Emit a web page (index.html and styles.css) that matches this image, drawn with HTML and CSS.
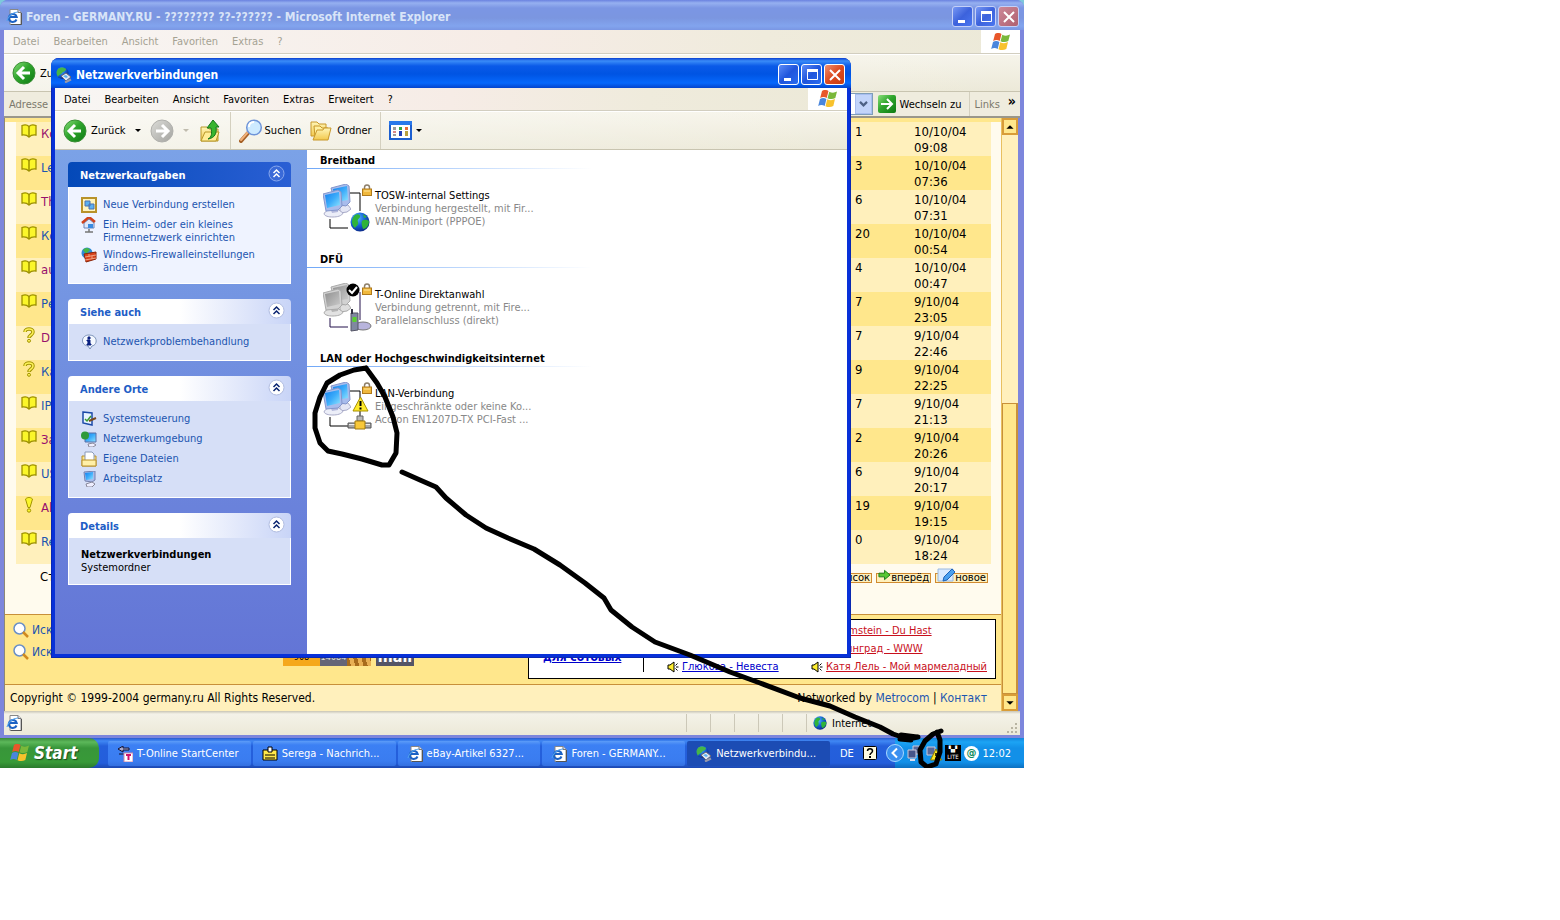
FILE: index.html
```html
<!DOCTYPE html>
<html lang="de">
<head>
    <meta charset="utf-8" />
    <meta name="viewport" content="width=device-width,initial-scale=1.0" />
    <title>Netzwerkverbindungen</title>
    <link rel="stylesheet" href="styles.css">
</head>
<body>
    <!-- shared icons -->
    <svg class="defs" width="0" height="0">
        <defs>
            <linearGradient id="gGreen" x1="0" y1="0" x2="1" y2="1"><stop offset="0" stop-color="#8be07a" /><stop offset=".45" stop-color="#2fa52c" /><stop offset="1" stop-color="#0c7a12" /></linearGradient>
            <linearGradient id="gGrey" x1="0" y1="0" x2="1" y2="1"><stop offset="0" stop-color="#dcdcd8" /><stop offset="1" stop-color="#a3a39f" /></linearGradient>
            <linearGradient id="gScreen" x1="0" y1="0" x2="1" y2="1"><stop offset="0" stop-color="#1480ee" /><stop offset=".5" stop-color="#3cacfa" /><stop offset="1" stop-color="#8fe4ff" /></linearGradient>
            <linearGradient id="gOff" x1="0" y1="0" x2="1" y2="1"><stop offset="0" stop-color="#8f8f8f" /><stop offset="1" stop-color="#cacaca" /></linearGradient>
            <radialGradient id="gGlobe" cx=".35" cy=".3" r=".8"><stop offset="0" stop-color="#5cc0ff" /><stop offset=".5" stop-color="#1460d8" /><stop offset="1" stop-color="#0a1f78" /></radialGradient>
            <linearGradient id="gFolder" x1="0" y1="0" x2="0" y2="1"><stop offset="0" stop-color="#fff6b8" /><stop offset="1" stop-color="#f2c84c" /></linearGradient>
        </defs>
        <symbol id="ie" viewBox="0 0 16 16">
            <path d="M4 .5h8l3 3v12H4z" fill="#fff" stroke="#888" /><path d="M12 .5v3h3" fill="#dde" stroke="#777" /><path d="M15.500 4v11.500H5" fill="none" stroke="#555" />
            <path d="M10.500 10.500a4 4 0 1 1 .2-2.500H4" fill="none" stroke="#1c62c4" stroke-width="2" />
            <path d="M1 12c1-5 6-9 11-9" fill="none" stroke="#4fa0ee" stroke-width="1.200" />
        </symbol>
        <symbol id="flag" viewBox="0 0 20 18">
            <path d="M4 1c2-1.500 4.500-1.300 6.500 0L8.700 8c-2-1.300-4.400-1.300-6.500 0z" fill="#e8562a" />
            <path d="M11.300 1.800c2.400 1.200 5 1.300 7.700-.2L17.300 8c-2.600 1.500-5.300 1.300-7.800.2z" fill="#7ab83a" />
            <path d="M2 9c2-1.400 4.400-1.300 6.400 0l-1.700 7c-2-1.300-4.400-1.300-6.500 0z" fill="#4a86dc" />
            <path d="M9.200 9.300c2.500 1.200 5.200 1.300 7.800-.2L15.300 16c-2.600 1.500-5.300 1.300-7.800.2z" fill="#f8c22c" />
        </symbol>
        <symbol id="back" viewBox="0 0 24 24">
            <circle cx="12" cy="12" r="11" fill="url(#gGreen)" stroke="#3a8f35" /><path d="M12 6l-6 6 6 6M7 12h11" fill="none" stroke="#fff" stroke-width="3" />
        </symbol>
        <symbol id="forward" viewBox="0 0 24 24">
            <circle cx="12" cy="12" r="11" fill="url(#gGrey)" stroke="#b0b0ac" /><path d="M12 6l6 6-6 6M17 12H6" fill="none" stroke="#fff" stroke-width="3" />
        </symbol>
        <symbol id="folder" viewBox="0 0 24 24">
            <path d="M2 3h6l2 2h7v12H2z" fill="url(#gFolder)" stroke="#c8982a" /><path d="M5 7h6l2 2h6v9H6z" fill="#fff0a0" stroke="#c8982a" /><path d="M4 21l4-10h6l1-2h7l-3 12z" fill="url(#gFolder)" stroke="#c8982a" />
        </symbol>
        <symbol id="up" viewBox="0 0 22 24">
            <path d="M2 8h6l2 2h9v12H2z" fill="url(#gFolder)" stroke="#b8982a" /><path d="M2 22l4-9h14l-3 9z" fill="#ffed96" stroke="#b8982a" />
            <path d="M9 20c4-2 4-6 3-11H8l6-8 6 7h-3c1 6-1 11-8 12z" fill="#37b52e" stroke="#14761a" />
        </symbol>
        <symbol id="lens" viewBox="0 0 24 24">
            <path d="M2 22l7-8" stroke="#a55f25" stroke-width="4" stroke-linecap="round" /><path d="M2 21l7-8" stroke="#f2b27a" stroke-width="2" stroke-linecap="round" />
            <circle cx="15" cy="8.500" r="7.300" fill="#cdeaff" stroke="#6f94d8" stroke-width="1.500" /><path d="M10 8c0-3 2-5 5-5" stroke="#fff" stroke-width="2" fill="none" />
        </symbol>
        <symbol id="views" viewBox="0 0 24 20">
            <rect x="1" y="1" width="21" height="17" fill="#fff" stroke="#1c5fd0" stroke-width="2" /><path d="M0 0h23v4H0z" fill="#2a78ea" />
            <path d="M4 6h3v3H4zM4 13h3v2H4z" fill="#9a9a9a" /><path d="M10 6h3v3h-3z" fill="#36a545" /><path d="M16 6h3v3h-3z" fill="#e86a35" /><path d="M4 10h3v2H4z" fill="#d88" /><path d="M10 10h3v5h-3z" fill="#2340b8" /><path d="M16 10h3v5h-3z" fill="#b8a040" />
        </symbol>
        <symbol id="net" viewBox="0 0 16 16">
            <circle cx="6.500" cy="6" r="6" fill="url(#gGlobe)" /><path d="M2 2c2-2 6-2 8 0 0 3-3 2-4 4s-3 1-4 4C0 7 0 4 2 2z" fill="#46b548" />
            <path d="M5 9l5-3 5 4-5 4z" fill="#dfe6f4" stroke="#667" /><path d="M7 9l3-1 2 2-2 1z" fill="#5ab0f0" /><path d="M9 15.500l6-3" stroke="#99a" stroke-width="2" />
        </symbol>
        <symbol id="globe" viewBox="0 0 20 20">
            <circle cx="10" cy="10" r="9.500" fill="url(#gGlobe)" /><path d="M5 3c3-2 6 0 5 2S7 7 8 10s-2 4-3 6C1 13 1 7 5 3zM12 9c3-2 5-1 7 0 0 5-3 8-6 8-1-3-2-6-1-8zM13 2l4 3-3 1z" fill="#2fb33a" />
        </symbol>
        <symbol id="pcs" viewBox="0 0 28 34">
            <path d="M17 22l8-1 3 4-4 3-7 1z" fill="#e4e6f4" stroke="#a9abc8" />
            <path d="M8 4l15-4 3 2 1 16-4 4-11-2z" fill="#a8bcec" stroke="#8496cc" /><path d="M10 5l14-3 1 14-13 2z" fill="url(#gScreen)" />
            <path d="M1 30c1-3 4-4 9-5l6 1 4 3c-1 3-6 4-10 4-5 0-8-1-9-3z" fill="#eceef8" stroke="#a9abc8" /><path d="M7 24l8-1v5l-6 1z" fill="#b4b9dc" />
            <path d="M0 10l15-4 3 2 1 14-4 4-12 1z" fill="#a8bcec" stroke="#8496cc" /><path d="M2 11l14-3 1 13-13 3z" fill="url(#gScreen)" />
        </symbol>
        <symbol id="pcsOff" viewBox="0 0 28 34">
            <path d="M17 22l8-1 3 4-4 3-7 1z" fill="#dedede" stroke="#aaa" />
            <path d="M8 4l15-4 3 2 1 16-4 4-11-2z" fill="#d2d2d2" stroke="#aaa" /><path d="M10 5l14-3 1 14-13 2z" fill="url(#gOff)" />
            <path d="M1 30c1-3 4-4 9-5l6 1 4 3c-1 3-6 4-10 4-5 0-8-1-9-3z" fill="#e2e2e2" stroke="#aaa" /><path d="M7 24l8-1v5l-6 1z" fill="#b4b4b4" />
            <path d="M0 10l15-4 3 2 1 14-4 4-12 1z" fill="#d2d2d2" stroke="#aaa" /><path d="M2 11l14-3 1 13-13 3z" fill="url(#gOff)" />
        </symbol>
        <symbol id="lock" viewBox="0 0 10 12">
            <path d="M2.500 6V3.500C2.500 0 7.500 0 7.500 3.500V6" fill="none" stroke="#8d7f6a" stroke-width="1.500" /><rect x=".5" y="5" width="9" height="6.500" fill="#f0b83c" stroke="#b07a1c" /><path d="M2 7h6" stroke="#ffe49a" />
        </symbol>
        <symbol id="book" viewBox="0 0 16 14">
            <path d="M1 1.500c3-1 5-1 7 1 2-2 4-2 7-1V11c-3-.5-5 0-7 2-2-2-4-2.500-7-2z" fill="#fbf62a" stroke="#9c9000" stroke-width="1.300" /><path d="M8 2.500V13" stroke="#9c9000" stroke-width="1.500" />
        </symbol>
        <symbol id="quest" viewBox="0 0 16 16">
            <path d="M4 5c0-4 8-4 8 0 0 3-4 3-4 6" fill="none" stroke="#a29400" stroke-width="3.500" /><path d="M4 5c0-4 8-4 8 0 0 3-4 3-4 5.500" fill="none" stroke="#fff25a" stroke-width="1.500" /><circle cx="8" cy="13.800" r="1.500" fill="#fff25a" stroke="#a29400" />
        </symbol>
        <symbol id="excl" viewBox="0 0 16 16">
            <path d="M4.500 2c2-2 5-2 7 0L9 10.500H7z" fill="#fbf62a" stroke="#a29400" /><circle cx="8" cy="13.500" r="1.700" fill="#fbf62a" stroke="#a29400" />
        </symbol>
        <symbol id="chev" viewBox="0 0 20 20">
            <circle class="chev-disc" cx="9.500" cy="9.500" r="7.500" /><path class="chev-line" d="M6.500 9l3-3 3 3M6.500 13l3-3 3 3" />
        </symbol>
        <symbol id="sound" viewBox="0 0 12 12"><path d="M1 4h2l4-3v10L3 8H1z" fill="#ffef30" stroke="#000" /><path d="M8.500 4.500l2-2M9 6h2.500M8.500 7.500l2 2" stroke="#000" /></symbol>
        <symbol id="pc" viewBox="0 0 16 16"><path d="M3 1l11-1v9l-3 2-7-1z" fill="#a8bcec" stroke="#7582ae" /><path d="M4 2l8-1v7l-7 1z" fill="url(#gScreen)" /><path d="M5 13l6-2 3 2-3 3H6z" fill="#eef" stroke="#889" /></symbol>
        <symbol id="down" viewBox="0 0 8 5"><path d="M1 1h6L4 4z" /></symbol>
        <symbol id="min" viewBox="0 0 16 16"><path d="M3 11h7v3H3z" fill="#fff" /></symbol>
        <symbol id="max" viewBox="0 0 16 16"><path d="M3.500 3.500h10v9h-10z" fill="none" stroke="#fff" /><path d="M3 2h11v3H3z" fill="#fff" /></symbol>
        <symbol id="close" viewBox="0 0 16 16"><path d="M3 3l10 10M13 3L3 13" stroke="#fff" stroke-width="2" /></symbol>
    </svg>

    <div class="desktop">
        <!-- browser window -->
        <section class="window browser">
            <header class="titlebar">
                <svg class="i16"><use href="#ie" /></svg>
                <h1>Foren - GERMANY.RU - ???????? ??-?????? - Microsoft Internet Explorer</h1>
                <button class="cap" aria-label="Minimieren"><svg><use href="#min" /></svg></button>
                <button class="cap" aria-label="Maximieren"><svg><use href="#max" /></svg></button>
                <button class="cap red" aria-label="Schließen"><svg><use href="#close" /></svg></button>
            </header>
            <nav class="menubar">
                <button>Datei</button><button>Bearbeiten</button><button>Ansicht</button><button>Favoriten</button><button>Extras</button><button>?</button>
                <span class="brand"><svg><use href="#flag" /></svg></span>
            </nav>
            <div class="toolbar">
                <button class="tool"><svg class="i24"><use href="#back" /></svg>Zurück</button>
            </div>
            <div class="address">
                <label for="adresse">Adresse</label>
                <select id="adresse"><option></option></select>
                <button class="drop" aria-label="Liste"><svg viewBox="0 0 10 8"><path d="M1 1l4 4 4-4" fill="none" stroke="#4d6185" stroke-width="2.500" /></svg></button>
                <button class="go"><svg viewBox="0 0 18 18"><rect width="18" height="18" rx="2" fill="url(#gGreen)" /><path d="M3 9h11M9 4l5 5-5 5" fill="none" stroke="#fff" stroke-width="2" /></svg>Wechseln zu</button>
                <span class="links">Links <b>»</b></span>
            </div>
            <div class="view">
                <div class="page">
                    <table class="threads">
                        <tr><td><svg><use href="#book" /></svg></td><td><a class="seen" href="#">Ко</a></td><td>1</td><td>10/10/04<br>09:08</td></tr>
                        <tr><td><svg><use href="#book" /></svg></td><td><a href="#">Le</a></td><td>3</td><td>10/10/04<br>07:36</td></tr>
                        <tr><td><svg><use href="#book" /></svg></td><td><a class="seen" href="#">Th</a></td><td>6</td><td>10/10/04<br>07:31</td></tr>
                        <tr><td><svg><use href="#book" /></svg></td><td><a href="#">Ко</a></td><td>20</td><td>10/10/04<br>00:54</td></tr>
                        <tr><td><svg><use href="#book" /></svg></td><td><a class="seen" href="#">au</a></td><td>4</td><td>10/10/04<br>00:47</td></tr>
                        <tr><td><svg><use href="#book" /></svg></td><td><a href="#">Ре</a></td><td>7</td><td>9/10/04<br>23:05</td></tr>
                        <tr><td><svg><use href="#quest" /></svg></td><td><a class="seen" href="#">D</a></td><td>7</td><td>9/10/04<br>22:46</td></tr>
                        <tr><td><svg><use href="#quest" /></svg></td><td><a href="#">Ка</a></td><td>9</td><td>9/10/04<br>22:25</td></tr>
                        <tr><td><svg><use href="#book" /></svg></td><td><a href="#">IP</a></td><td>7</td><td>9/10/04<br>21:13</td></tr>
                        <tr><td><svg><use href="#book" /></svg></td><td><a class="seen" href="#">За</a></td><td>2</td><td>9/10/04<br>20:26</td></tr>
                        <tr><td><svg><use href="#book" /></svg></td><td><a href="#">US</a></td><td>6</td><td>9/10/04<br>20:17</td></tr>
                        <tr><td><svg><use href="#excl" /></svg></td><td><a class="seen" href="#">Al</a></td><td>19</td><td>9/10/04<br>19:15</td></tr>
                        <tr><td><svg><use href="#book" /></svg></td><td><a href="#">Re</a></td><td>0</td><td>9/10/04<br>18:24</td></tr>
                    </table>
                    <div class="pager">
                        <span>Стр</span>
                        <button>список</button>
                        <button><svg viewBox="0 0 14 12"><path d="M1 4h6V1l6 5-6 5V8H1z" fill="#58c832" stroke="#1a7a1a" /></svg>вперёд</button>
                        <button><svg class="pen" viewBox="0 0 18 14"><path d="M1 1h15v12H1z" fill="#d8eaff" stroke="#9ab8e0" /><path d="M6 13l1-4 8-8 3 3-8 8z" fill="#4aa0ee" stroke="#1c62b8" /></svg>новое</button>
                    </div>
                    <div class="foot">
                        <div class="find">
                            <a href="#"><svg viewBox="0 0 16 16"><circle cx="6.500" cy="6.500" r="5.500" fill="#fff" stroke="#6a90c8" stroke-width="1.500" /><path d="M10 10l5 5" stroke="#d08a20" stroke-width="2.500" /></svg>Иск</a>
                            <a href="#"><svg viewBox="0 0 16 16"><circle cx="6.500" cy="6.500" r="5.500" fill="#fff" stroke="#6a90c8" stroke-width="1.500" /><path d="M10 10l5 5" stroke="#d08a20" stroke-width="2.500" /></svg>Иск</a>
                        </div>
                        <div class="badges"><span class="hits">908</span><span class="hosts">14084</span><span class="paw"></span><span class="mail">mail</span></div>
                        <div class="music">
                            <a class="cell" href="#">для сотовых</a>
                            <ul>
                                <li><a href="#">Глюкоза - Невеста</a><svg><use href="#sound" /></svg></li>
                            </ul>
                            <ul class="hot">
                                <li><a href="#">Rammstein - Du Hast</a><svg><use href="#sound" /></svg></li>
                                <li><a href="#">Ленинград - WWW</a><svg><use href="#sound" /></svg></li>
                                <li><a href="#">Катя Лель - Мой мармеладный</a><svg><use href="#sound" /></svg></li>
                            </ul>
                        </div>
                    </div>
                    <div class="copy">
                        <span>Copyright © 1999-2004 germany.ru All Rights Reserved.</span>
                        <span>Networked by <a href="#">Metrocom</a> | <a href="#">Контакт</a></span>
                    </div>
                </div>
                <div class="scroll">
                    <button aria-label="Nach oben"><svg class="flip"><use href="#down" /></svg></button>
                    <div class="thumb"></div>
                    <button aria-label="Nach unten"><svg><use href="#down" /></svg></button>
                </div>
            </div>
            <footer class="status">
                <svg class="i16"><use href="#ie" /></svg>
                <i></i><i></i><i></i><i></i><i></i>
                <span class="zone"><svg><use href="#globe" /></svg>Internet</span>
                <svg class="grip" viewBox="0 0 12 12"><path d="M9 1h2M5 5h2M9 5h2M1 9h2M5 9h2M9 9h2" stroke="#b8b4a2" stroke-width="2" /></svg>
            </footer>
        </section>

        <!-- taskbar -->
        <footer class="taskbar">
            <button class="start"><svg><use href="#flag" /></svg>Start</button>
            <div class="tasks">
                <button><svg viewBox="0 0 16 16"><path d="M1 3l5-3v2h6v2H6v2zM2 8h8" fill="#aac" stroke="#113" /><rect x="7" y="7" width="9" height="9" fill="#fff" stroke="#c8a" /><path d="M9 9h5M11.500 9v5" stroke="#d0106a" stroke-width="2" /></svg>T-Online StartCenter</button>
                <button><svg viewBox="0 0 16 16"><path d="M1 4h14v10H1z" fill="#ffe94a" stroke="#000" /><path d="M6 1h4v5H6z" fill="#fff" stroke="#000" /><path d="M3 9h10M3 12h10" stroke="#000" /></svg>Serega - Nachrich...</button>
                <button><svg><use href="#ie" /></svg>eBay-Artikel 6327...</button>
                <button><svg><use href="#ie" /></svg>Foren - GERMANY...</button>
                <button class="active"><svg><use href="#net" /></svg>Netzwerkverbindu...</button>
            </div>
            <div class="lang"><span>DE</span><svg viewBox="0 0 14 16"><rect x=".5" y="1.500" width="13" height="13" rx="1" fill="#fffbe0" stroke="#000" /><path d="M4.500 6c0-3 5-3 5 0 0 2-2.500 2-2.500 4" fill="none" stroke="#000" stroke-width="1.500" /><path d="M6 11h2v2H6z" /></svg></div>
            <div class="tray">
                <button class="more" aria-label="Einblenden"><svg viewBox="0 0 18 18"><circle cx="9" cy="9" r="8.500" fill="#3a90f0" stroke="#a8d8ff" /><path d="M11 4.500L6.500 9l4.500 4.500" fill="none" stroke="#fff" stroke-width="2" /></svg></button>
                <svg viewBox="0 0 16 16"><path d="M6 1h8v8H6z" fill="#5a6a9a" stroke="#ccd" /><path d="M1 5h8v8H1z" fill="#46558a" stroke="#ccd" /><path d="M3 15h5" stroke="#dde" stroke-width="2" /></svg>
                <svg viewBox="0 0 16 16"><path d="M1 2h8v8H1z" fill="#5a6a9a" stroke="#ccd" /><path d="M10 4l5.500 11h-11z" fill="#ffe824" stroke="#8a7a00" /><path d="M10 8v3M10 12.500v1.500" stroke="#000" stroke-width="1.500" /></svg>
                <span class="lite"><b>▚▞</b>LITE</span>
                <span class="at">@</span>
                <time>12:02</time>
            </div>
        </footer>

        <!-- network connections window, lies over the browser -->
        <section class="window explorer">
            <header class="titlebar">
                <svg class="i16"><use href="#net" /></svg>
                <h2>Netzwerkverbindungen</h2>
                <button class="cap" aria-label="Minimieren"><svg><use href="#min" /></svg></button>
                <button class="cap" aria-label="Maximieren"><svg><use href="#max" /></svg></button>
                <button class="cap red" aria-label="Schließen"><svg><use href="#close" /></svg></button>
            </header>
            <nav class="menubar">
                <button>Datei</button><button>Bearbeiten</button><button>Ansicht</button><button>Favoriten</button><button>Extras</button><button>Erweitert</button><button>?</button>
                <span class="brand"><svg><use href="#flag" /></svg></span>
            </nav>
            <div class="toolbar">
                <button class="tool"><svg class="i24"><use href="#back" /></svg>Zurück <svg class="tri"><use href="#down" /></svg></button>
                <button class="tool dim" aria-label="Vorwärts"><svg class="i24"><use href="#forward" /></svg><svg class="tri"><use href="#down" /></svg></button>
                <button class="tool" aria-label="Aufwärts"><svg class="i24"><use href="#up" /></svg></button>
                <i class="sep"></i>
                <button class="tool tight"><svg class="i24"><use href="#lens" /></svg>Suchen</button>
                <button class="tool"><svg class="i24"><use href="#folder" /></svg>Ordner</button>
                <i class="sep"></i>
                <button class="tool tight" aria-label="Ansichten"><svg class="i24"><use href="#views" /></svg><svg class="tri"><use href="#down" /></svg></button>
            </div>
            <div class="panes">
                <aside>
                    <div class="box main">
                        <h3>Netzwerkaufgaben<button aria-label="Zuklappen"><svg><use href="#chev" /></svg></button></h3>
                        <ul>
                            <li><svg viewBox="0 0 16 16"><path d="M1 1h14v14H1z" fill="#fff4c0" stroke="#b8922a" stroke-width="2" /><path d="M4 4h5v5H4zM8 7h5v5H8z" fill="#5ab0f0" stroke="#4a70b0" /></svg><a href="#">Neue Verbindung erstellen</a></li>
                            <li><svg viewBox="0 0 16 16"><path d="M3 6l5-4 5 4v5H3z" fill="#dfe8fa" stroke="#6a84b8" /><path d="M1 6l7-6 6 5" fill="none" stroke="#d0421c" stroke-width="2.500" /><path d="M7 7h5v4H7z" fill="#3a8ae0" /><path d="M8 12v3M4 15h8" stroke="#777" stroke-width="1.500" /></svg><a href="#">Ein Heim- oder ein kleines Firmennetzwerk einrichten</a></li>
                            <li><svg viewBox="0 0 16 16"><circle cx="6" cy="6" r="5.500" fill="#2c8ad8" /><path d="M2 3c3-3 6-2 7 0l-4 4z" fill="#46b548" /><path d="M3 7l12-2v7L5 15z" fill="#d8431c" stroke="#8a2408" /><path d="M4 10l11-2M4 13l11-2M8 7v3M11 9v3" stroke="#f0a080" /></svg><a href="#">Windows-Firewalleinstellungen ändern</a></li>
                        </ul>
                    </div>
                    <div class="box">
                        <h3>Siehe auch<button aria-label="Zuklappen"><svg><use href="#chev" /></svg></button></h3>
                        <ul>
                            <li><svg viewBox="0 0 16 16"><path d="M8 1c9 0 9 10 3 11l-2 3-2-3C-1 11 0 1 8 1z" fill="#f4f8ff" stroke="#7c93b8" /><path d="M7 3h2v2H7zM6 6h3v4h1v1H6v-1h1V7H6z" fill="#0a2080" stroke="#0a2080" /></svg><a href="#">Netzwerkproblembehandlung</a></li>
                        </ul>
                    </div>
                    <div class="box">
                        <h3>Andere Orte<button aria-label="Zuklappen"><svg><use href="#chev" /></svg></button></h3>
                        <ul>
                            <li><svg viewBox="0 0 16 16"><path d="M2 1l9 1v12l-9-2z" fill="#e8f4ff" stroke="#1c4aa8" stroke-width="1.500" /><path d="M4 8l2 2 4-5" fill="none" stroke="#3a9a30" stroke-width="1.500" /><path d="M8 10l7-3" stroke="#7a4a20" stroke-width="2" /></svg><a href="#">Systemsteuerung</a></li>
                            <li><svg viewBox="0 0 16 16"><path d="M4 2h11v9H4z" fill="url(#gScreen)" stroke="#5a70a8" /><circle cx="4" cy="4.500" r="4" fill="#2f9a3a" /><path d="M7 13l5-1 3 2-3 2H8z" fill="#eef" stroke="#889" /></svg><a href="#">Netzwerkumgebung</a></li>
                            <li><svg viewBox="0 0 16 16"><path d="M1 5h14v10H1z" fill="#ffe68a" stroke="#b8902a" /><path d="M4 1h7l2 2v7H4z" fill="#fff" stroke="#8a9ab8" /><path d="M1 9h14v6H1z" fill="#fff0a8" stroke="#b8902a" /></svg><a href="#">Eigene Dateien</a></li>
                            <li><svg><use href="#pc" /></svg><a href="#">Arbeitsplatz</a></li>
                        </ul>
                    </div>
                    <div class="box">
                        <h3>Details<button aria-label="Zuklappen"><svg><use href="#chev" /></svg></button></h3>
                        <p><b>Netzwerkverbindungen</b><br>Systemordner</p>
                    </div>
                </aside>
                <main>
                    <h4>Breitband</h4>
                    <div class="conn">
                        <svg viewBox="0 0 50 50">
                            <path d="M27 10h10v18M7 36v9h18" fill="none" stroke="#000" />
                            <use href="#pcs" width="28" height="34" y="1" /><use href="#lock" x="39" y="1" width="10" height="12" /><use href="#globe" x="27" y="29" width="20" height="20" />
                        </svg>
                        <p>TOSW-internal Settings<span>Verbindung hergestellt, mit Fir...</span><span>WAN-Miniport (PPPOE)</span></p>
                    </div>
                    <h4>DFÜ</h4>
                    <div class="conn">
                        <svg viewBox="0 0 50 50">
                            <path d="M37 10v28M7 36v9h18" fill="none" stroke="#22104a" />
                            <use href="#pcsOff" width="28" height="34" y="1" /><use href="#lock" x="39" y="1" width="10" height="12" />
                            <circle cx="30" cy="8" r="6.500" /><path d="M26 8l3 3 5-6" fill="none" stroke="#fff" stroke-width="2" />
                            <ellipse cx="40" cy="44" rx="8" ry="4" fill="#b8b4dc" stroke="#777" /><path d="M28 31h7v17l-7 1z" fill="#8088a0" stroke="#556" /><path d="M29.500 35h4v5h-4z" fill="#5ad030" /><path d="M29 27v5" stroke="#334" stroke-width="2" />
                        </svg>
                        <p>T-Online Direktanwahl<span>Verbindung getrennt, mit Fire...</span><span>Parallelanschluss (direkt)</span></p>
                    </div>
                    <h4>LAN oder Hochgeschwindigkeitsinternet</h4>
                    <div class="conn">
                        <svg viewBox="0 0 50 50">
                            <path d="M27 10h10v32M7 36v9h18" fill="none" stroke="#000" />
                            <use href="#pcs" width="28" height="34" y="1" /><use href="#lock" x="39" y="1" width="10" height="12" />
                            <path d="M37.500 16l7.500 14H30z" fill="#ffea2a" stroke="#a89000" /><path d="M37.500 20v5M37.500 26.500v2" stroke="#000" stroke-width="2" />
                            <path d="M25 42h23v5H25z" fill="#a8a8a8" stroke="#555" /><path d="M26 43.500h21" stroke="#eee" /><path d="M34 35h6v5h-6z" fill="#b8b8b8" stroke="#666" /><path d="M32 40h10v8H32z" fill="#f8c83a" stroke="#a07a10" />
                        </svg>
                        <p>LAN-Verbindung<span>Eingeschränkte oder keine Ko...</span><span>Accton EN1207D-TX PCI-Fast ...</span></p>
                    </div>
                </main>
            </div>
        </section>

        <!-- pen marks -->
        <svg class="pen-marks" width="1024" height="768" viewBox="0 0 1024 768">
            <path d="M366 368L354 370 340 375 327 383 320 397 315 413 315 428 320 443 328 451 342 454 362 459 382 465 389 465 396 453 397 433 393 417 385 397 377 383 366 368" />
            <path d="M402 472L420 480 436 487 446 498 466 515 486 528 508 538 534 549 560 565 585 583 604 598 611 610 632 627 655 642 690 655 730 672 760 683 800 698 830 706 855 717 880 727 893 734 908 739 918 737M900 739L911 740M901 735L917 737" />
            <path d="M941 731L933 734 925 741 920 750 921 762 927 767 936 764 940 752 940 740 937 732" />
        </svg>
    </div>
</body>
</html>
```
FILE: styles.css
```css
* {
    box-sizing: border-box;
    padding: 0;
    margin: 0;
}

body {
    background: #fff;
    font-family: Tahoma, "DejaVu Sans Condensed", "Noto Sans", sans-serif;
    font-size: 11px;
    line-height: 13px;
    color: #000;
}

button {
    font: inherit;
    color: inherit;
    background: none;
    border: none;
}

a {
    color: #1c55b0;
    text-decoration: none;
}

ul {
    list-style: none;
}

svg {
    flex: none;
}

.defs {
    position: absolute;
}

.desktop {
    position: relative;
    max-width: 1024px;
    background: #7dc8dc;
}

.i16 {
    width: 16px;
    height: 16px;
}

.i24 {
    width: 24px;
    height: 24px;
}

/* windows */
.window {
    border-radius: 8px 8px 0 0;
}

.browser {
    background: #7d86dc;
    padding: 0 4px 3px;
}

.explorer {
    position: absolute;
    top: 58px;
    left: 51px;
    right: 173px;
    background: #0831d9;
    border: 1px solid #0a28b0;
    border-top: none;
    padding: 0 3px 3px;
}

.titlebar {
    display: flex;
    align-items: center;
    gap: 3px;
    height: 30px;
    margin: 0 -4px;
    padding: 3px 5px 0 6px;
    border-radius: 8px 8px 0 0;
    background: linear-gradient(#6a82e0, #96b0f0 3px, #7b96e4 8px, #7b96e0 18px, #82a4ee 26px, #7a96e4);
    color: #d8e4f8;
}

    .titlebar h1, .titlebar h2 {
        flex: 1;
        padding: 1px 0 0 1px;
        font-size: 12px;
        line-height: 16px;
        white-space: nowrap;
        overflow: hidden;
    }

.explorer .titlebar {
    background: linear-gradient(#0a3fd0, #3a8cf8 3px, #0a5ae8 8px, #0054e3 16px, #0668fc 25px, #0444cc);
    color: #fff;
    padding-left: 5px;
    padding-right: 6px;
}

.cap {
    width: 21px;
    height: 21px;
    border: 1px solid #c4d0f8;
    border-radius: 3px;
    background: linear-gradient(135deg, #7898f4, #3c62dc 50%, #4a76f0);
}

    .cap + .cap {
        margin-left: -1px;
    }

    .cap svg {
        display: block;
        width: 16px;
        height: 16px;
        margin: auto;
    }

    .cap.red {
        background: linear-gradient(135deg, #cc8898, #b06070);
    }

.explorer .cap {
    border-color: #fff;
    background: linear-gradient(135deg, #5c8cf8, #2055dc 50%, #2a6cf0);
}

.explorer .cap.red {
    background: linear-gradient(135deg, #f09070, #dc4a20 50%, #c83c10);
}

.menubar {
    display: flex;
    align-items: center;
    height: 24px;
    gap: 14px;
    padding-left: 9px;
    background: linear-gradient(90deg, #f8f6f4, #f6ece6 50%, #efebdc 75%, #ece9d8);
    border-bottom: 1px solid #d2cec0;
    color: #a5a293;
}

.brand {
    align-self: stretch;
    display: flex;
    align-items: center;
    justify-content: center;
    width: 39px;
    margin-left: auto;
    background: #fff;
}

    .brand svg {
        width: 20px;
        height: 18px;
    }

.explorer .menubar {
    height: 23px;
    color: #000;
}

.toolbar {
    display: flex;
    align-items: center;
    height: 38px;
    gap: 8px;
    padding-left: 8px;
    background: linear-gradient(90deg, rgba(255, 255, 255, .5), rgba(255, 255, 255, 0)), linear-gradient(#f6f4ea, #ece9d8);
    border-top: 1px solid #fff;
    border-bottom: 1px solid #c8c4b0;
}

.explorer .toolbar {
    height: 39px;
}

.tool {
    display: flex;
    align-items: center;
    gap: 4px;
    white-space: nowrap;
}

    .tool .tri {
        width: 8px;
        height: 5px;
        margin-left: 4px;
    }

    .tool.dim .tri {
        fill: #c0bcae;
    }

    .tool.tight {
        gap: 2px;
    }

        .tool.tight .tri {
            margin-left: 0;
        }

.sep {
    align-self: stretch;
    width: 1px;
    background: #d4d0bf;
}

.address {
    display: flex;
    align-items: center;
    height: 26px;
    padding-left: 5px;
    background: #efecde;
    border-bottom: 2px solid #9a978a;
    color: #7c796c;
}

    .address select {
        flex: 1;
        min-width: 0;
        height: 22px;
        margin-left: 4px;
        appearance: none;
        background: #fff;
        border: 1px solid #7f9db9;
    }

    .address .drop {
        width: 17px;
        height: 20px;
        margin-left: -18px;
        background: #c2d4fa;
        border: 1px solid #a8bef0;
        position: relative;
    }

.drop svg {
    display: block;
    width: 9px;
    height: 7px;
    margin: auto;
}

.go {
    display: flex;
    align-items: center;
    gap: 4px;
    margin: 0 8px 0 6px;
    color: #000;
}

    .go svg {
        width: 18px;
        height: 18px;
    }

.links {
    align-self: stretch;
    display: flex;
    align-items: center;
    gap: 8px;
    padding: 0 4px;
    border-left: 1px solid #d4d0bf;
}

    .links b {
        color: #000;
        font-size: 14px;
        padding-bottom: 6px;
    }

/* forum page */
.view {
    display: flex;
    margin-right: 2px;
    border-left: 1px solid #8c8878;
}

.page {
    flex: 1;
    min-width: 0;
    background: #fffbee;
    border-top: 4px solid #ffe78c;
    font-size: 13px;
    line-height: 16px;
}

.threads {
    width: 975px;
    max-width: 100%;
    margin-left: 11px;
    border-collapse: collapse;
    table-layout: fixed;
}

    .threads tr {
        background: #fff0bc;
    }

        .threads tr:nth-child(even) {
            background: #ffe78c;
        }

    .threads td {
        vertical-align: top;
        padding: 2px 0 0 0;
    }

        .threads td:nth-child(1) {
            width: 25px;
            padding-top: 1px;
            padding-left: 5px;
        }

        .threads td:nth-child(2) {
            padding-top: 4px;
        }

        .threads td:nth-child(3) {
            width: 59px;
        }

        .threads td:nth-child(4) {
            width: 77px;
        }

    .threads svg {
        display: block;
        width: 16px;
        height: 16px;
    }

    .threads .seen {
        color: #98106c;
    }

.pager {
    display: flex;
    align-items: center;
    justify-content: flex-end;
    gap: 4px;
    height: 50px;
    padding: 0 13px 24px 35px;
}

    .pager span {
        margin-right: auto;
    }

    .pager button {
        display: flex;
        align-items: center;
        height: 10px;
        margin-top: 2px;
        padding: 0 1px;
        border: 1px solid #d08a30;
        background: #fff0bc;
        font-family: Verdana, "DejaVu Sans", sans-serif;
        font-size: 10px;
    }

    .pager svg {
        width: 13px;
        height: 12px;
        margin-top: -6px;
    }

    .pager .pen {
        width: 18px;
        height: 14px;
    }

.foot {
    display: flex;
    align-items: flex-start;
    height: 71px;
    padding: 4px 5px 5px 8px;
    background: #ffe78c;
    border-top: 1px solid #c8903a;
    border-bottom: 1px solid #c8903a;
    overflow: hidden;
}

.find {
    display: flex;
    flex-direction: column;
    gap: 6px;
    padding-top: 3px;
    font-size: 12px;
}

    .find a {
        display: flex;
        gap: 3px;
    }

    .find svg {
        width: 16px;
        height: 16px;
    }

.badges {
    display: flex;
    align-items: flex-end;
    height: 47px;
    margin-left: auto;
    margin-right: 114px;
    font-size: 9px;
    line-height: 14px;
}

    .badges span {
        height: 16px;
        text-align: center;
    }

.hits {
    width: 37px;
    background: #f5a81c;
}

.hosts {
    width: 27px;
    background: #667;
    color: #ddd;
}

.paw {
    width: 24px;
    background: repeating-linear-gradient(75deg, #a86c1c 0 4px, #e8b054 4px 8px);
}

.badges .mail {
    width: 38px;
    margin-left: 5px;
    background: #556;
    color: #fff;
    font-size: 16px;
    font-weight: bold;
}

.music {
    display: flex;
    width: 468px;
    height: 60px;
    padding: 2px 8px 2px 14px;
    background: #fff;
    border: 1px solid #000;
    font-size: 11px;
    line-height: 18px;
    white-space: nowrap;
}

    .music a {
        color: #0000cc;
        text-decoration: underline;
    }

    .music .cell {
        display: flex;
        align-items: flex-end;
        width: 101px;
        margin-bottom: 4px;
        padding-bottom: 6px;
        border-right: 1px solid #000;
        font-size: 12px;
        font-weight: bold;
    }

    .music ul {
        display: flex;
        flex-direction: column;
        justify-content: flex-end;
        padding-left: 23px;
    }

    .music li {
        display: flex;
        flex-direction: row-reverse;
        justify-content: flex-end;
        align-items: center;
        gap: 3px;
    }

    .music svg {
        width: 12px;
        height: 12px;
    }

    .music .hot {
        margin-left: auto;
        padding-left: 0;
    }

        .music .hot a {
            color: #c8101c;
        }

.copy {
    display: flex;
    justify-content: space-between;
    height: 26px;
    padding: 5px 14px 0 5px;
    background: #fff0bc;
    font-size: 12px;
}

.scroll {
    display: flex;
    flex-direction: column;
    width: 17px;
    background: #fff0bc;
    border-left: 1px solid #e8c060;
}

    .scroll button {
        height: 17px;
        border: 2px solid #d89c38;
        background: #ffe78c;
    }

    .scroll svg {
        display: block;
        width: 10px;
        height: 6px;
        margin: auto;
    }

    .scroll .flip {
        transform: rotate(180deg);
    }

.thumb {
    height: 291px;
    margin-top: auto;
    background: #ffe78c;
    border: 1px solid #c8903a;
    border-right-width: 2px;
}

.status {
    display: flex;
    align-items: center;
    height: 24px;
    padding: 0 2px;
    background: linear-gradient(#c8c4b4, #f4f2e8 3px, #ece9d8);
}

    .status i {
        width: 24px;
        height: 18px;
        border-left: 1px solid #ccc8b8;
    }

        .status i:first-of-type {
            margin-left: auto;
        }

.zone {
    display: flex;
    align-items: center;
    gap: 5px;
    width: 200px;
    height: 18px;
    padding-left: 6px;
    border-left: 1px solid #ccc8b8;
}

    .zone svg {
        width: 14px;
        height: 14px;
    }

.grip {
    align-self: flex-end;
    width: 12px;
    height: 12px;
}

/* taskbar */
.taskbar {
    display: flex;
    align-items: stretch;
    height: 30px;
    background: linear-gradient(#2a5cd0, #4088f4 3px, #2460dc 8px, #245edb 25px, #1c48b0);
    color: #fff;
}

.start {
    display: flex;
    align-items: center;
    gap: 4px;
    width: 99px;
    padding-left: 10px;
    border-radius: 0 10px 10px 0;
    background: linear-gradient(#3a8a3a, #5cb85a 4px, #38963a 10px, #389a38 24px, #2a7a2c);
    font-size: 17px;
    font-weight: bold;
    font-style: italic;
    text-shadow: 1px 1px 1px #1c4a1c;
}

    .start svg {
        width: 20px;
        height: 18px;
    }

.tasks {
    flex: 1;
    display: flex;
    gap: 2px;
    padding: 3px 0 2px 9px;
}

    .tasks button {
        flex: 1;
        display: flex;
        align-items: center;
        gap: 4px;
        min-width: 0;
        padding-left: 9px;
        border-radius: 2px;
        background: linear-gradient(#5c9cf8, #3c80f4 4px, #3a7cf0 20px, #3470e0);
        white-space: nowrap;
        overflow: hidden;
    }

        .tasks button.active {
            background: #1c4cb4;
        }

    .tasks svg {
        width: 16px;
        height: 16px;
    }

.lang {
    display: flex;
    align-items: center;
    gap: 9px;
    width: 65px;
    padding-left: 10px;
}

    .lang svg {
        width: 14px;
        height: 16px;
    }

.tray {
    display: flex;
    align-items: center;
    gap: 3px;
    width: 129px;
    padding-right: 13px;
    background: linear-gradient(#1484dc, #1ca4f4 4px, #1290e8 10px, #1290e8 24px, #0c70c0);
}

    .tray svg {
        width: 16px;
        height: 16px;
    }

    .tray .more {
        height: 18px;
        margin-left: -9px;
    }

        .tray .more svg {
            width: 18px;
            height: 18px;
        }

    .tray time {
        margin-left: auto;
    }

.lite {
    width: 16px;
    height: 16px;
    background: #000;
    font-size: 6px;
    line-height: 8px;
    text-align: center;
}

    .lite b {
        display: block;
    }

.at {
    width: 15px;
    height: 15px;
    border-radius: 50%;
    background: #fff;
    color: #0a8a5a;
    font-weight: bold;
    line-height: 14px;
    text-align: center;
}

/* explorer content */
.panes {
    display: flex;
    min-height: 504px;
    background: #fff;
}

aside {
    display: flex;
    flex-direction: column;
    gap: 15px;
    width: 252px;
    padding: 12px 16px 12px 13px;
    background: linear-gradient(#7ba2e7, #6375d6);
}

.box {
    --disc: #fff;
    --ring: #b0bce0;
    --arrow: #0a2470;
}

    .box.main {
        --disc: #3a6ad8;
        --ring: #88a8ee;
        --arrow: #fff;
    }

.box h3 {
    display: flex;
    align-items: center;
    justify-content: space-between;
    height: 25px;
    padding: 1px 4px 0 12px;
    border-radius: 4px 4px 0 0;
    background: linear-gradient(90deg, #fff 50%, #c8d4f7);
    color: #215dc6;
    font-size: 11px;
}

.box button, .box button svg {
    display: block;
    width: 20px;
    height: 20px;
}

.box button {
    margin-top: -3px;
}

.chev-disc {
    fill: var(--disc);
    stroke: var(--ring);
}

.chev-line {
    fill: none;
    stroke: var(--arrow);
    stroke-width: 1.5px;
}

.box ul {
    display: flex;
    flex-direction: column;
    gap: 2px;
    padding: 9px 12px;
    background: #d6dff7;
    border: 1px solid #fff;
    border-top: none;
}

.box p {
    padding: 10px 12px;
    background: #d6dff7;
    border: 1px solid #fff;
    border-top: none;
}

.box li {
    display: flex;
    gap: 6px;
    min-height: 18px;
    padding-top: 1px;
}

    .box li svg {
        width: 16px;
        height: 16px;
    }

    .box li a {
        padding-top: 1px;
    }

.box.main h3 {
    background: linear-gradient(90deg, #0449b8, #2a5fd4);
    color: #fff;
}

.box.main ul {
    background: #eff3ff;
}

main {
    flex: 1;
    min-width: 0;
}

    main h4 {
        height: 19px;
        padding: 4px 0 0 13px;
        font-size: 11px;
        background: linear-gradient(90deg, #70a8f8, #fff 285px) bottom / 100% 1px no-repeat;
    }

.conn {
    display: flex;
    gap: 2px;
    padding: 14px 0 16px 16px;
}

    .conn svg {
        width: 50px;
        height: 50px;
    }

    .conn p {
        padding-top: 6px;
    }

    .conn span {
        display: block;
        color: #888;
    }

.pen-marks {
    position: absolute;
    top: 0;
    left: 0;
    fill: none;
    stroke: #000;
    stroke-width: 5px;
    stroke-linejoin: round;
    stroke-linecap: round;
    pointer-events: none;
}
```
